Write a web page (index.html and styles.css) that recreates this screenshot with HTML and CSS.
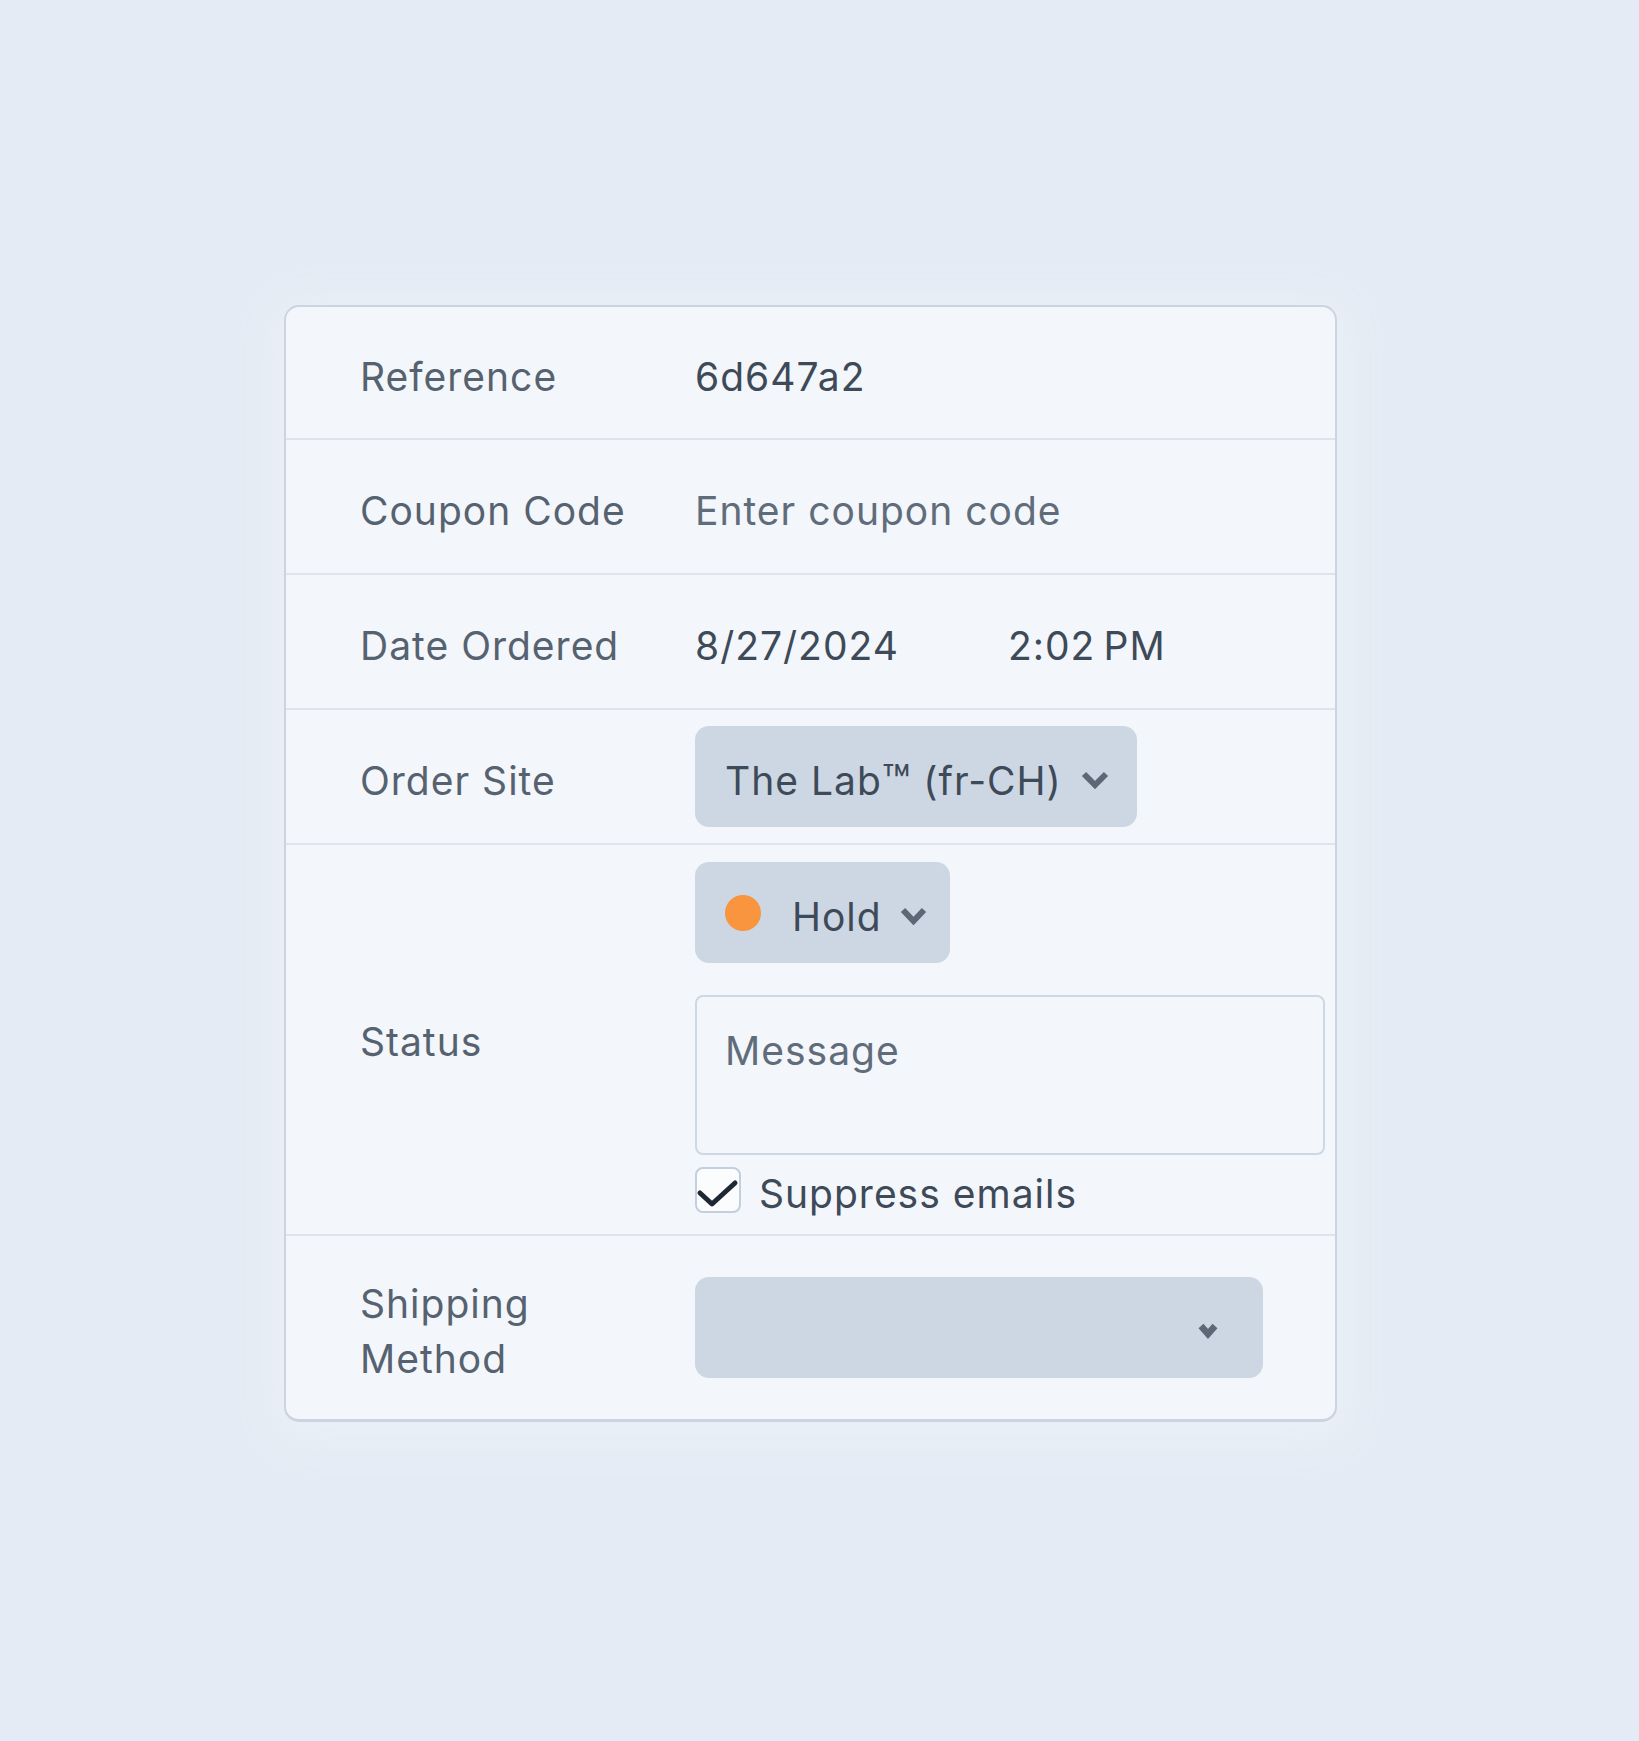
FILE: index.html
```html
<!DOCTYPE html>
<html lang="en">
<head>
<meta charset="utf-8">
<title>Order details</title>
<link rel="stylesheet" href="styles.css">
</head>
<body>
<div class="page">
  <div class="card">
    <div class="row">
      <div class="label">Reference</div>
      <div class="value strong">6d647a2</div>
    </div>
    <div class="row">
      <div class="label">Coupon Code</div>
      <div class="value placeholder">Enter coupon code</div>
    </div>
    <div class="row">
      <div class="label">Date Ordered</div>
      <div class="value strong datetime"><span class="date">8/27/2024</span><span class="time">2:02&#8239;PM</span></div>
    </div>
    <div class="row">
      <div class="label">Order Site</div>
      <div class="value">
        <div class="select site-select">
          <span class="select-text">The Lab<span class="tm">™</span> (fr-CH)</span>
          <svg class="chev" width="28" height="18" viewBox="0 0 28 18"><polyline points="3,3 14,14 25,3" fill="none" stroke="#5c6875" stroke-width="6"/></svg>
        </div>
      </div>
    </div>
    <div class="row status-row">
      <div class="label">Status</div>
      <div class="value status-stack">
        <div class="select hold-select">
          <span class="dot"></span>
          <span class="select-text">Hold</span>
          <svg class="chev" width="27" height="18" viewBox="0 0 27 18"><polyline points="3,3 13.5,14 24,3" fill="none" stroke="#5c6875" stroke-width="6"/></svg>
        </div>
        <div class="textarea"><span class="placeholder">Message</span></div>
        <div class="check-row">
          <span class="checkbox">
            <svg width="46" height="46" viewBox="0 0 46 46"><polyline points="5,26 17,37 40,16" fill="none" stroke="#1e2833" stroke-width="5" stroke-linecap="round" stroke-linejoin="round"/></svg>
          </span>
          <span class="check-label">Suppress emails</span>
        </div>
      </div>
    </div>
    <div class="row ship-row">
      <div class="label">Shipping<br>Method</div>
      <div class="value">
        <div class="select ship-select">
          <svg class="chev" width="22" height="19" viewBox="0 0 22 19"><polyline points="4,5 11,13 18,5" fill="none" stroke="#5c6875" stroke-width="6.5"/></svg>
        </div>
      </div>
    </div>
  </div>
</div>
</body>
</html>
```

FILE: styles.css
```css
html, body {
  margin: 0;
  padding: 0;
  background: #e4ebf4;
}
body {
  font-family: Inter, "Noto Sans", "Liberation Sans", sans-serif;
  font-size: 39px;
  letter-spacing: 1px;
  line-height: 55px;
  color: #56626f;
}
.page {
  padding: 305px 0 0 284px;
  min-height: 1436px;
}
.card {
  width: 1053px;
  box-sizing: border-box;
  background: #f3f6fb;
  border: 2px solid #cbd4e0;
  border-bottom-width: 3px;
  border-radius: 15px;
  box-shadow: 0 8px 40px 12px #eaf0f7;
  overflow: hidden;
}
.row {
  display: grid;
  grid-template-columns: 335px 1fr;
  align-items: center;
  box-sizing: border-box;
  min-height: 135px;
  padding: 16px 10px 16px 74px;
  border-bottom: 2px solid #dfe4eb;
}
.row:first-child {
  min-height: 133px;
}
.row:last-child {
  border-bottom: none;
}
.label {
  color: #56626f;
  padding-top: 8px;
}
.value {
  color: #56626f;
}
.strong {
  color: #3e4a58;
}
.placeholder {
  color: #606c7a;
}
.row > .value.strong,
.row > .value.placeholder {
  padding-top: 8px;
}
.datetime {
  display: flex;
}
.date {
  width: 313px;
}
.select {
  display: inline-flex;
  align-items: center;
  box-sizing: border-box;
  height: 101px;
  background: #cdd7e3;
  border-radius: 14px;
  color: #3e4a58;
}
.select-text {
  padding-top: 8px;
}
.tm {
  font-size: 1.2em;
  line-height: 0;
  vertical-align: -0.06em;
}
.site-select {
  width: 442px;
  padding: 0 28px 0 30px;
  justify-content: space-between;
}
.hold-select {
  width: 255px;
  padding: 0 25px 0 30px;
}
.dot {
  width: 36px;
  height: 36px;
  border-radius: 50%;
  background: #f9943f;
  margin-right: 31px;
  flex: none;
}
.hold-select .select-text {
  margin-right: 18px;
}
.chev {
  display: block;
  flex: none;
  margin-top: 7px;
}
.status-row {
  padding-top: 17px;
  padding-bottom: 21px;
}
.status-stack {
  display: flex;
  flex-direction: column;
  align-items: flex-start;
}
.textarea {
  box-sizing: border-box;
  width: 630px;
  height: 160px;
  margin-top: 32px;
  border: 2px solid #cdd8e4;
  border-radius: 8px;
  padding: 26px 28px 0;
  background: #f3f6fb;
}
.check-row {
  display: flex;
  align-items: center;
  height: 46px;
  line-height: 46px;
  margin-top: 12px;
  color: #3e4a58;
}
.check-label {
  padding-top: 8px;
}
.checkbox {
  box-sizing: border-box;
  width: 46px;
  height: 46px;
  border: 2px solid #c3cfdd;
  border-radius: 8px;
  background: #fbfcfe;
  position: relative;
  margin-right: 18px;
  flex: none;
}
.checkbox svg {
  position: absolute;
  left: -2px;
  top: -2px;
}
.ship-row {
  padding-top: 32px;
  padding-bottom: 33px;
}
.ship-select {
  width: 568px;
  padding: 0 44px 0 30px;
  justify-content: flex-end;
}
```
